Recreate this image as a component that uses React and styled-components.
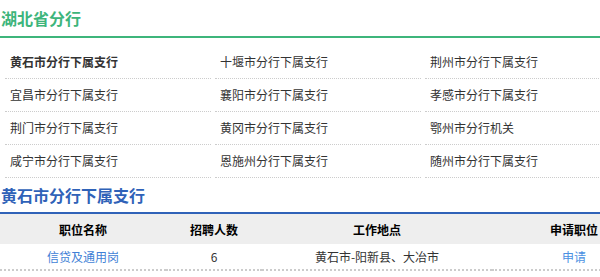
import React from "react";
import styled, { createGlobalStyle } from "styled-components";

const GlobalStyle = createGlobalStyle`
  html, body {
    margin: 0;
    padding: 0;
    overflow: hidden;
    background: #fff;
  }
  body {
    font-family: "Microsoft YaHei", "Noto Sans CJK SC", "Noto Sans", sans-serif;
    font-size: 12px;
    color: #333;
  }
`;

const branches = [
  "黄石市分行下属支行",
  "十堰市分行下属支行",
  "荆州市分行下属支行",
  "宜昌市分行下属支行",
  "襄阳市分行下属支行",
  "孝感市分行下属支行",
  "荆门市分行下属支行",
  "黄冈市分行下属支行",
  "鄂州市分行机关",
  "咸宁市分行下属支行",
  "恩施州分行下属支行",
  "随州市分行下属支行",
];

const jobs = [
  { name: "信贷及通用岗", count: 6, place: "黄石市-阳新县、大冶市" },
];

const App = () => {
  return (
    <Page>
      <GlobalStyle />
      <Inner>
        <Title color="#3db57b">湖北省分行</Title>
        <Branches>
          {branches.map((b, i) => (
            <Branch key={i} active={i === 0}>
              {b}
            </Branch>
          ))}
        </Branches>
        <Title color="#2f62b8">黄石市分行下属支行</Title>
        <Table>
          <colgroup>
            <col style={{ width: 166 }} />
            <col style={{ width: 96 }} />
            <col style={{ width: 230 }} />
            <col style={{ width: 164 }} />
          </colgroup>
          <thead>
            <tr>
              <Th>职位名称</Th>
              <Th>招聘人数</Th>
              <Th>工作地点</Th>
              <Th>申请职位</Th>
            </tr>
          </thead>
          <tbody>
            {jobs.map((job, i) => (
              <tr key={i}>
                <Td>
                  <Link>{job.name}</Link>
                </Td>
                <Td>{job.count}</Td>
                <Td>{job.place}</Td>
                <Td>
                  <Link light>申请</Link>
                </Td>
              </tr>
            ))}
          </tbody>
        </Table>
      </Inner>
    </Page>
  );
};

const Page = styled.div`
  width: 600px;
  overflow: hidden;
`;

const Inner = styled.div`
  width: 656px;
`;

const Title = styled.h2`
  margin: 0;
  height: 34px;
  line-height: 34px;
  padding-left: 1px;
  font-size: 16px;
  font-weight: bold;
  color: ${(p) => p.color};
  border-bottom: 2px solid ${(p) => p.color};
  &:first-child {
    height: 36px;
    line-height: 36px;
  }
`;

const Branches = styled.div`
  display: grid;
  grid-template-columns: repeat(3, 206px);
  column-gap: 4px;
  padding: 8px 0 0 5px;
`;

const Branch = styled.div`
  height: 32px;
  line-height: 32px;
  padding-left: 5px;
  border-bottom: 1px dotted #ccc;
  font-weight: ${(p) => (p.active ? "bold" : "normal")};
  color: #333;
  cursor: pointer;
  &:hover {
    color: #2f62b8;
  }
`;

const Table = styled.table`
  width: 656px;
  border-collapse: collapse;
  table-layout: fixed;
  tbody tr {
    border-bottom: 2px dotted #ccc;
  }
`;

const Th = styled.th`
  height: 30px;
  padding: 0;
  background: #eee;
  color: #000;
  font-weight: bold;
  text-align: center;
`;

const Td = styled.td`
  height: 25px;
  padding: 0;
  text-align: center;
  color: #333;
`;

const Link = styled.a`
  color: ${(p) => (p.light ? "#4a90e2" : "#3f7fd6")};
  cursor: pointer;
`;

export default App;
